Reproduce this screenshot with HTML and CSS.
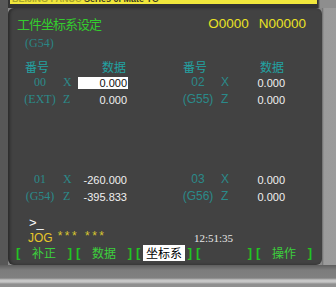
FILE: index.html
```html
<!DOCTYPE html>
<html>
<head>
<meta charset="utf-8">
<link rel="stylesheet" href="styles.css">
</head>
<body>
<div class="device">
  <div class="topbar">
    <div class="brand"><span class="brand-text"><span class="b1">BEIJING FANUC</span> Series 0i Mate TC</span></div>
  </div>
  <div class="middle">
    <div class="edge-l"></div>
    <div class="screen">
      <div class="head">
        <span class="title">工件坐标系设定</span>
        <span class="prog"><span>O0000</span><span>N00000</span></span>
      </div>
      <div class="g54">(G54)</div>
      <div class="tbl">
        <span class="th th-no">番号</span><span></span><span class="th th-val">数据</span>
        <span class="th th-no rl">番号</span><span></span><span class="th th-val">数据</span>

        <span class="lab serif">00</span><span class="ax serif">X</span><span class="val sel">0.000</span>
        <span class="lab rl">02</span><span class="ax">X</span><span class="val">0.000</span>

        <span class="lab serif">(EXT)</span><span class="ax serif">Z</span><span class="val">0.000</span>
        <span class="lab rl">(G55)</span><span class="ax">Z</span><span class="val">0.000</span>
      </div>
      <div class="tbl lower">
        <span class="lab serif">01</span><span class="ax serif">X</span><span class="val">-260.000</span>
        <span class="lab rl">03</span><span class="ax">X</span><span class="val">0.000</span>

        <span class="lab serif">(G54)</span><span class="ax serif">Z</span><span class="val">-395.833</span>
        <span class="lab rl">(G56)</span><span class="ax">Z</span><span class="val">0.000</span>
      </div>
      <div class="prompt">&gt;_</div>
      <div class="status">
        <span class="mode"><span class="jog">JOG</span><span class="stars">*** ***</span></span>
        <span class="clock">12:51:35</span>
      </div>
      <div class="keys">
        <div class="key"><span class="br">[</span><span class="kl">补正</span><span class="br">]</span></div>
        <div class="key"><span class="br">[</span><span class="kl">数据</span><span class="br">]</span></div>
        <div class="key"><span class="br">[</span><span class="kl active">坐标系</span><span class="br">]</span></div>
        <div class="key"><span class="br">[</span><span class="kl"></span><span class="br">]</span></div>
        <div class="key"><span class="br">[</span><span class="kl">操作</span><span class="br">]</span></div>
      </div>
    </div>
    <div class="edge-r"></div>
  </div>
  <div class="bottom"></div>
</div>
</body>
</html>
```
FILE: styles.css
```css
* { box-sizing: border-box; }
body {
  margin: 0;
  width: 336px;
  height: 287px;
  overflow: hidden;
  background: #8a8a8a;
  font-family: "Liberation Sans", "Noto Sans CJK SC", sans-serif;
}
.device {
  display: flex;
  flex-direction: column;
  height: 287px;
}
.topbar {
  height: 8px;
  display: flex;
  padding-left: 10px;
  background: linear-gradient(to right, #585858 0, #585858 8px, #333 8px, #333 318px, #8e8e8e 320px);
}
.brand {
  width: 307px;
  height: 4px;
  background: #f1e73c;
  overflow: hidden;
  white-space: nowrap;
  font: bold 9px/9px "Liberation Sans", sans-serif;
  color: #3a3a20;
}
.brand-text {
  display: block;
  margin-top: -5px;
  padding-left: 2px;
}
.b1 { color: #a9a52a; }

.middle {
  display: flex;
  height: 257px;
}
.edge-l {
  width: 8px;
  background: #575757;
}
.edge-r {
  width: 14px;
  background: linear-gradient(to right, #6c6c6c 0, #9b9b9b 2px, #9c9c9c 100%);
}
.screen {
  flex: 1;
  background: #424242;
  border-radius: 6px;
  box-shadow: inset 2px 0 3px rgba(0, 0, 0, 0.35);
  display: flex;
  flex-direction: column;
}

.head {
  display: flex;
  justify-content: space-between;
  align-items: center;
  padding: 6px 16px 0 9px;
  height: 25px;
}
.title {
  font: 13px/19px "Noto Sans CJK SC", sans-serif;
  letter-spacing: -1px;
  color: #34cc2e;
}
.prog {
  display: flex;
  gap: 10px;
  font: 13.5px/19px "Liberation Sans", sans-serif;
  color: #e9e124;
}

.g54 {
  margin-top: 2px;
  padding-left: 17px;
  font: 12px/16px "Liberation Serif", serif;
  color: #2b8585;
}

.tbl {
  margin-top: 8px;
  padding-left: 16px;
  display: grid;
  grid-template-columns: 32px 22px 50px 54px 32px 22px 50px;
  grid-template-rows: 15px 17px 17px;
  align-items: center;
}
.tbl.lower {
  margin-top: 63px;
  grid-template-rows: 17px 17px;
}
.rl { grid-column: 5; }
.th {
  font: 12px/15px "Noto Sans CJK SC", sans-serif;
  color: #22a3a3;
}
.th-no { padding-left: 1px; }
.th-val { text-align: right; padding-right: 2px; }
.lab {
  text-align: center;
  font: 12px/17px "Liberation Sans", sans-serif;
  color: #2b8a8a;
}
.ax {
  padding-left: 7px;
  font: 12px/17px "Liberation Sans", sans-serif;
  color: #2b8a8a;
}
.serif { font-family: "Liberation Serif", serif; }
.val {
  text-align: right;
  padding-right: 1px;
  font: 11px/12px "Liberation Sans", sans-serif;
  color: #f0f0f0;
}
.val.sel {
  background: #ffffff;
  color: #111;
  height: 12px;
}

.prompt {
  margin-top: 10px;
  padding-left: 21px;
  font: 13px/16px "Liberation Sans", sans-serif;
  color: #ffffff;
}
.status {
  display: grid;
  grid-template-columns: 166px auto;
  padding-left: 20px;
  height: 14px;
  align-items: center;
}
.mode { display: flex; align-items: center; }
.jog {
  font: 12px/14px "Liberation Sans", sans-serif;
  color: #e6c62a;
}
.stars {
  margin-left: 5px;
  font: 12px/14px "Liberation Sans", sans-serif;
  letter-spacing: 2.5px;
  color: #d8c730;
  position: relative;
  top: -2px;
}
.clock {
  font: 11px/14px "Liberation Serif", serif;
  color: #e6e6e6;
}

.keys {
  display: grid;
  grid-template-columns: repeat(5, 56px);
  column-gap: 4px;
  padding-left: 8px;
  height: 16px;
}
.key {
  display: flex;
  justify-content: space-between;
  align-items: center;
  height: 16px;
}
.br {
  font: bold 13px/16px "Liberation Sans", sans-serif;
  color: #22c322;
}
.kl {
  font: 12px/16px "Noto Sans CJK SC", sans-serif;
  color: #3dd03d;
}
.kl.active {
  background: #ffffff;
  color: #000;
  padding: 0 3px;
  height: 16px;
}

.bottom {
  flex: 1;
  background: linear-gradient(to bottom, #5e5e5e 0, #7c7c7c 5px, #808080 13px, #c6c6c6 15px, #c6c6c6 17px, #8f8f8f 19px, #8f8f8f 100%);
}
```
